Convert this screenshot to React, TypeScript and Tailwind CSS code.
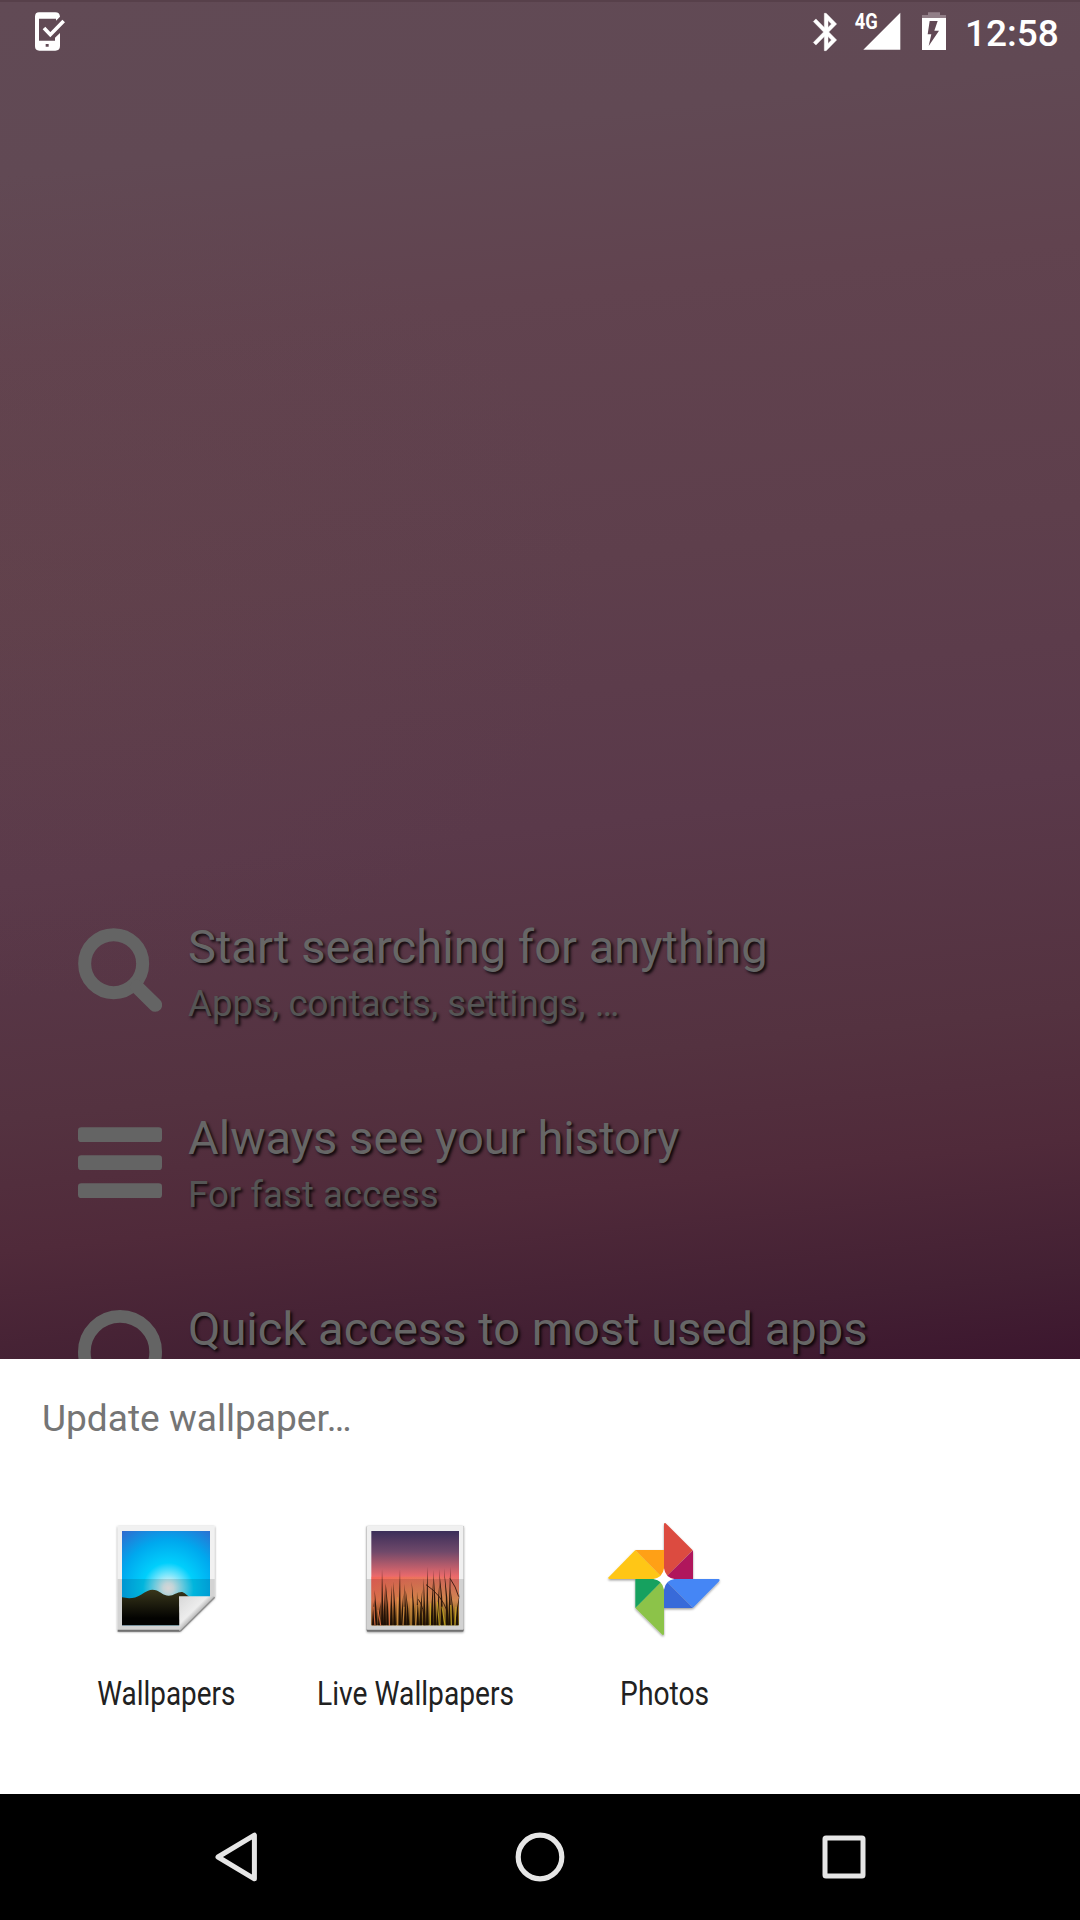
import React from "react";

const hints = [
  { icon: "search", title: "Start searching for anything", sub: "Apps, contacts, settings, …" },
  { icon: "list", title: "Always see your history", sub: "For fast access" },
  { icon: "circle", title: "Quick access to most used apps", sub: "" },
];

function HintIcon({ name }: { name: string }) {
  return (
    <svg className="mt-[13px] block h-[84px] w-[84px] shrink-0" viewBox="0 0 252 252" fill="none" stroke="#646464">
      {name === "search" && (
        <>
          <circle cx="107" cy="107" r="87" strokeWidth="39" />
          <path d="M176 176L232 231" strokeWidth="41" strokeLinecap="round" />
        </>
      )}
      {name === "list" && (
        <g fill="#646464" stroke="none">
          <rect x="0" y="25" width="252" height="44" rx="10" />
          <rect x="0" y="109" width="252" height="44" rx="10" />
          <rect x="0" y="193" width="252" height="44" rx="10" />
        </g>
      )}
      {name === "circle" && <circle cx="126" cy="126" r="107" strokeWidth="38" />}
    </svg>
  );
}

function StatusBar() {
  return (
    <div className="flex h-[72px] items-start justify-between border-t-2 border-[#57404a]">
      <svg className="-mt-0.5 h-[70px] w-[70px]" viewBox="0 0 210 210">
        <path
          fill="#fff"
          fillRule="evenodd"
          d="M117 37H166Q179 37 180 50L168 62V56H117V122H165V113L180 99V138Q180 152 166 152H118Q105 152 105 139V50Q105 37 117 37ZM137 132H146V140H137Z"
        />
        <path d="M132 84L151 104L191 63" fill="none" stroke="#fff" strokeWidth="11" />
      </svg>
      <div className="-mt-0.5 flex">
        <svg className="h-[70px] w-[170px]" viewBox="0 0 510 210">
          <path
            transform="translate(42.5 28.8) scale(5.5 5.6)"
            d="M17.71 7.71L12 2h-1v7.59L6.41 5 5 6.41 10.59 12 5 17.59 6.41 19 11 14.41V22h1l5.71-5.71-4.3-4.29 4.3-4.29zM13 5.83l1.88 1.88L13 9.59V5.83zm1.88 10.46L13 18.17v-3.76l1.88 1.88z"
            fill="#fff"
            stroke="#fff"
            strokeWidth=".25"
          />
          <path d="M331 38V149H220Z" fill="#fff" />
          <path d="M414 37H450V45H468V54H396V45H414Z" fill="#927f88" />
          <path d="M396 54H468V150H396Z" fill="#fff" />
          <path d="M419 63H443L433 92H447L416 138L424 103H413Z" fill="#614854" />
          <text x="194" y="87" className="font-['Roboto'] text-[64px] font-bold" fill="#fff" textLength="69" lengthAdjust="spacingAndGlyphs">
            4G
          </text>
        </svg>
        <div className="w-[120px] pt-[12px] pl-[5px] text-[37px] leading-[43px] font-medium text-white">12:58</div>
      </div>
    </div>
  );
}

function WallpapersIcon() {
  return (
    <svg className="block h-[130px] w-[130px]" viewBox="0 0 390 390">
      <defs>
        <radialGradient id="sky" cx="205" cy="235" r="225" gradientUnits="userSpaceOnUse">
          <stop offset="0" stopColor="#f6f4f4" />
          <stop offset=".07" stopColor="#dcf2f6" />
          <stop offset=".2" stopColor="#6fe4fc" />
          <stop offset=".34" stopColor="#00cffc" />
          <stop offset=".64" stopColor="#00a8ee" />
          <stop offset="1" stopColor="#3566cc" />
        </radialGradient>
        <linearGradient id="hill" x1="0" y1="0" x2="0" y2="1">
          <stop offset="0" stopColor="#39371b" />
          <stop offset=".8" stopColor="#030301" />
        </linearGradient>
        <linearGradient id="fold" x1="0" y1="0" x2="1" y2="1">
          <stop offset="0" stopColor="#d8d8d8" />
          <stop offset=".4" stopColor="#ededed" />
          <stop offset=".5" stopColor="#bdbdbd" />
        </linearGradient>
        <filter id="iconShadow" x="-10%" y="-10%" width="120%" height="125%">
          <feDropShadow dx="0" dy="2.5" stdDeviation="2.5" floodOpacity=".5" />
        </filter>
      </defs>
      <path d="M53 48H344V262L240 363H53Z" fill="#f1f1f1" filter="url(#iconShadow)" />
      <path d="M66 63H330V262L240 346H66Z" fill="url(#sky)" />
      <path d="M53 207H344V262L240 363H53Z" fill="#000" opacity=".12" />
      <path d="M66 262C85 266 105 266 123 254C144 241 154 236 168 241C184 247 190 257 206 257C222 257 234 244 247 246C258 250 262 258 270 262L240 346H66Z" fill="url(#hill)" />
      <path d="M53 362H241" stroke="#707070" strokeWidth="6" />
      <path d="M237 259H344L238 364Z" fill="url(#fold)" />
      <path d="M344 262L241 364" stroke="#8b8b8b" strokeWidth="4" />
    </svg>
  );
}

const blades = [
  [70, 268, -3], [78, 240, 4], [88, 275, -4], [97, 178, 1], [104, 222, -2], [113, 218, 6], [124, 226, 0], [134, 215, 4],
  [149, 178, -1], [157, 250, -3], [166, 222, 2], [174, 240, 7], [191, 215, 6], [203, 245, 2],
  [212, 238, -5], [223, 205, 2], [232, 170, 0], [246, 205, -4], [255, 180, 5], [264, 208, -5], [277, 178, 10],
  [292, 175, 10], [299, 170, -2], [309, 235, 8], [320, 250, -9],
];

function LiveWallpapersIcon() {
  return (
    <svg className="block h-[130px] w-[130px]" viewBox="0 0 390 390">
      <defs>
        <linearGradient id="dusk" x1="0" y1="63" x2="0" y2="346" gradientUnits="userSpaceOnUse">
          <stop offset="0" stopColor="#3b2e59" />
          <stop offset=".22" stopColor="#70496a" />
          <stop offset=".48" stopColor="#ea6a6c" />
          <stop offset=".75" stopColor="#f09c5c" />
          <stop offset="1" stopColor="#e0c020" />
        </linearGradient>
        <linearGradient id="redSide" x1="0" x2="1">
          <stop offset="0" stopColor="#ff5c4c" />
          <stop offset="1" stopColor="#dfb51c" stopOpacity="0" />
        </linearGradient>
        <linearGradient id="ground" x1="0" y1="270" x2="0" y2="346" gradientUnits="userSpaceOnUse">
          <stop offset="0" stopColor="#100704" stopOpacity="0" />
          <stop offset="1" stopColor="#100704" stopOpacity=".6" />
        </linearGradient>
        <filter id="panelShadow" x="-10%" y="-10%" width="120%" height="125%">
          <feDropShadow dx="0" dy="2" stdDeviation="2.5" floodOpacity=".45" />
        </filter>
      </defs>
      <rect x="50" y="48" width="291" height="317" rx="3" fill="#707070" filter="url(#panelShadow)" />
      <rect x="50" y="48" width="291" height="311" rx="3" fill="#f0f0f0" />
      <path d="M64 63H327V346H64Z" fill="url(#dusk)" />
      <path d="M64 200H327V346H64Z" fill="url(#redSide)" opacity=".5" />
      <path d="M50 207H341V359H50Z" fill="#000" opacity=".12" />
      <path d="M64 270H327V346H64Z" fill="url(#ground)" />
      {blades.map(([x, y, lean]) => (
        <path key={x} d={`M${x - 4} 346Q${x - 2} ${(y + 346) / 2} ${x - lean} ${y}Q${x + 2} ${(y + 346) / 2} ${x + 4} 346Z`} fill="#130704" opacity=".85" />
      ))}
      <path d="M228 224Q275 255 292 305M300 205Q318 230 326 260M205 268Q222 290 225 346" fill="none" stroke="#2a1008" strokeWidth="2.5" />
      <path d="M75 346L71 290M92 346L84 300M118 346V270" stroke="#f07a4c" strokeWidth="3.5" opacity=".8" />
      <path d="M143 346V262M159 346L162 290M183 346V265M197 346L201 285" stroke="#e09a48" strokeWidth="3.5" opacity=".75" />
      <path d="M241 346V280M268 346L262 275M285 346L276 290M304 346L302 285M315 346L318 290" stroke="#cfae24" strokeWidth="3.5" opacity=".8" />
    </svg>
  );
}

function PhotosIcon() {
  return (
    <svg className="block h-[130px] w-[130px]" viewBox="0 0 390 390">
      <defs>
        <filter id="pinShadow" x="-10%" y="-10%" width="120%" height="125%">
          <feDropShadow dx="0" dy="4" stdDeviation="3.5" floodOpacity=".4" />
        </filter>
      </defs>
      <g filter="url(#pinShadow)">
        <path d="M192 42Q193 38 197 40L278 121L192 207Z" fill="#dc4c3f" />
        <path d="M279 121V207H192Z" fill="#b0195c" />
        <path d="M192 207H356Q361 209 358 213L279 293Z" fill="#4486f5" />
        <path d="M192 207L279 294H192Z" fill="#396ad9" />
        <path d="M192 207V372Q191 377 187 374L106 294Z" fill="#8cc34a" />
        <path d="M106 207H192L106 294Z" fill="#18a15f" />
        <path d="M106 120L192 207H27Q23 206 26 202Z" fill="#ffc619" />
        <path d="M106 120H192V207Z" fill="#ffa015" />
      </g>
      <path d="M192 175Q196 203 223 207Q196 211 192 239Q188 211 160 207Q188 203 192 175Z" fill="#fff" />
    </svg>
  );
}

const apps = [
  { label: "Wallpapers", width: 138, center: 121.3, Icon: WallpapersIcon },
  { label: "Live Wallpapers", width: 197, center: 120.6, Icon: LiveWallpapersIcon },
  { label: "Photos", width: 89, center: 119.6, Icon: PhotosIcon },
];

function AppLabel({ label, width, center }: { label: string; width: number; center: number }) {
  return (
    <svg className="mt-5 block h-[60px] w-[240px]" viewBox="0 0 240 60">
      <text
        x={center - width / 2}
        y="45"
        textLength={width}
        lengthAdjust="spacingAndGlyphs"
        className="font-['Roboto'] text-[32.5px]"
        fill="#212121"
      >
        {label}
      </text>
    </svg>
  );
}

export default function App() {
  return (
    <div className="flex h-[1920px] w-[1080px] flex-col overflow-hidden bg-black font-['Roboto',sans-serif]">
      <div className="h-[1359px] overflow-hidden bg-[radial-gradient(ellipse_600px_420px_at_0px_580px,#69474a40,#69474a00),linear-gradient(174deg,#614a55_0%,#614954_12%,#61434f_24%,#5e3f4c_42%,#5a394a_60%,#543240_76%,#502a3a_85%,#432033_94%,#3c162e_100%)]">
        <StatusBar />
        <div className="flex flex-col gap-[77px] pt-[843px] pl-[78px]">
          {hints.map((h) => (
            <div key={h.title} className="flex h-[114px] gap-[26px]">
              <HintIcon name={h.icon} />
              <div className="pt-1 whitespace-nowrap [text-shadow:2px_2px_3px_rgba(0,0,0,0.85)]">
                <div className="h-[60px] text-[47.1px] leading-[55px] text-[#666]">{h.title}</div>
                {h.sub && <div className="text-[36.7px] leading-[50px] text-[#555]">{h.sub}</div>}
              </div>
            </div>
          ))}
        </div>
      </div>
      <div className="h-[435px] bg-white">
        <div className="h-[151px] pt-[36px] pl-[42px] text-[37.1px] leading-[48px] text-[#757575]">Update wallpaper…</div>
        <div className="flex pl-[40px]">
          {apps.map(({ label, width, center, Icon }) => (
            <div key={label} className="flex w-[250px] flex-col items-center">
              <Icon />
              <AppLabel label={label} width={width} center={center} />
            </div>
          ))}
        </div>
      </div>
      <div className="flex h-[126px] items-center justify-center gap-[234px]">
        <svg className="h-[70px] w-[70px]" viewBox="0 0 70 70" fill="none" stroke="#e6e6e6" strokeWidth="5" strokeLinejoin="round">
          <path d="M53.4 13.2V56.8L17 35Z" />
        </svg>
        <svg className="h-[70px] w-[70px]" viewBox="0 0 70 70" fill="none" stroke="#e6e6e6" strokeWidth="5.2">
          <circle cx="35" cy="35" r="21.8" />
        </svg>
        <svg className="h-[70px] w-[70px]" viewBox="0 0 70 70" fill="none" stroke="#e6e6e6" strokeWidth="5">
          <rect x="16" y="16" width="38" height="38" rx="1" />
        </svg>
      </div>
    </div>
  );
}
